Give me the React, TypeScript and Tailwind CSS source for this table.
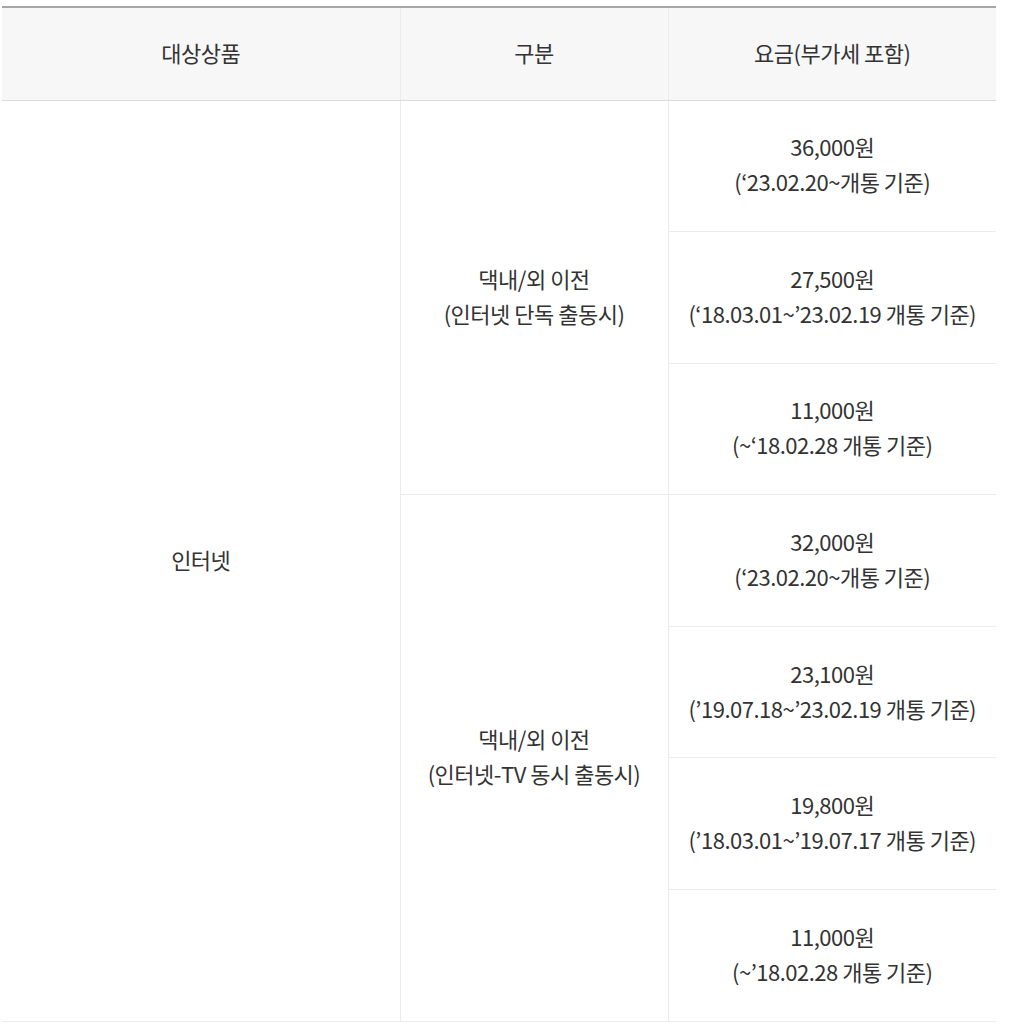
const rows = [
  { price: '36,000원', note: '(‘23.02.20~개통 기준)' },
  { price: '27,500원', note: '(‘18.03.01~’23.02.19 개통 기준)' },
  { price: '11,000원', note: '(~‘18.02.28 개통 기준)' },
  { price: '32,000원', note: '(‘23.02.20~개통 기준)' },
  { price: '23,100원', note: '(’19.07.18~’23.02.19 개통 기준)' },
  { price: '19,800원', note: '(’18.03.01~’19.07.17 개통 기준)' },
  { price: '11,000원', note: '(~’18.02.28 개통 기준)' },
];

const cell = 'border border-[#ebebeb] pb-[3px] text-center align-middle';

export default function App() {
  return (
    <div
      className="min-h-screen bg-white pl-[2px] pt-[6px] text-[#333]"
      style={{ fontFamily: '"Noto Sans CJK KR", "Noto Sans", sans-serif' }}
    >
      <table className="w-[994px] table-fixed border-collapse text-[22px] leading-[35px] tracking-[-0.5px]">
        <colgroup>
          <col className="w-[398px]" />
          <col className="w-[268px]" />
          <col className="w-[328px]" />
        </colgroup>
        <thead>
          <tr className="h-[93px] border-t-2 border-t-[#a6a6a6] bg-[#f7f7f7]">
            <th className={`${cell} border-t-[#a6a6a6] border-b-[#dcdcdc] border-l-0 font-normal`}>대상상품</th>
            <th className={`${cell} border-t-[#a6a6a6] border-b-[#dcdcdc] font-normal`}>구분</th>
            <th className={`${cell} border-t-[#a6a6a6] border-b-[#dcdcdc] border-r-0 font-normal`}>요금(부가세 포함)</th>
          </tr>
        </thead>
        <tbody>
          {rows.map((r, i) => (
            <tr key={i} className="h-[131.6px]">
              {i === 0 && (
                <td rowSpan={7} className={`${cell} border-l-0`}>
                  인터넷
                </td>
              )}
              {i === 0 && (
                <td rowSpan={3} className={cell}>
                  댁내/외 이전
                  <br />
                  (인터넷 단독 출동시)
                </td>
              )}
              {i === 3 && (
                <td rowSpan={4} className={cell}>
                  댁내/외 이전
                  <br />
                  (인터넷-TV 동시 출동시)
                </td>
              )}
              <td className={`${cell} border-r-0`}>
                {r.price}
                <br />
                {r.note}
              </td>
            </tr>
          ))}
        </tbody>
      </table>
    </div>
  );
}
